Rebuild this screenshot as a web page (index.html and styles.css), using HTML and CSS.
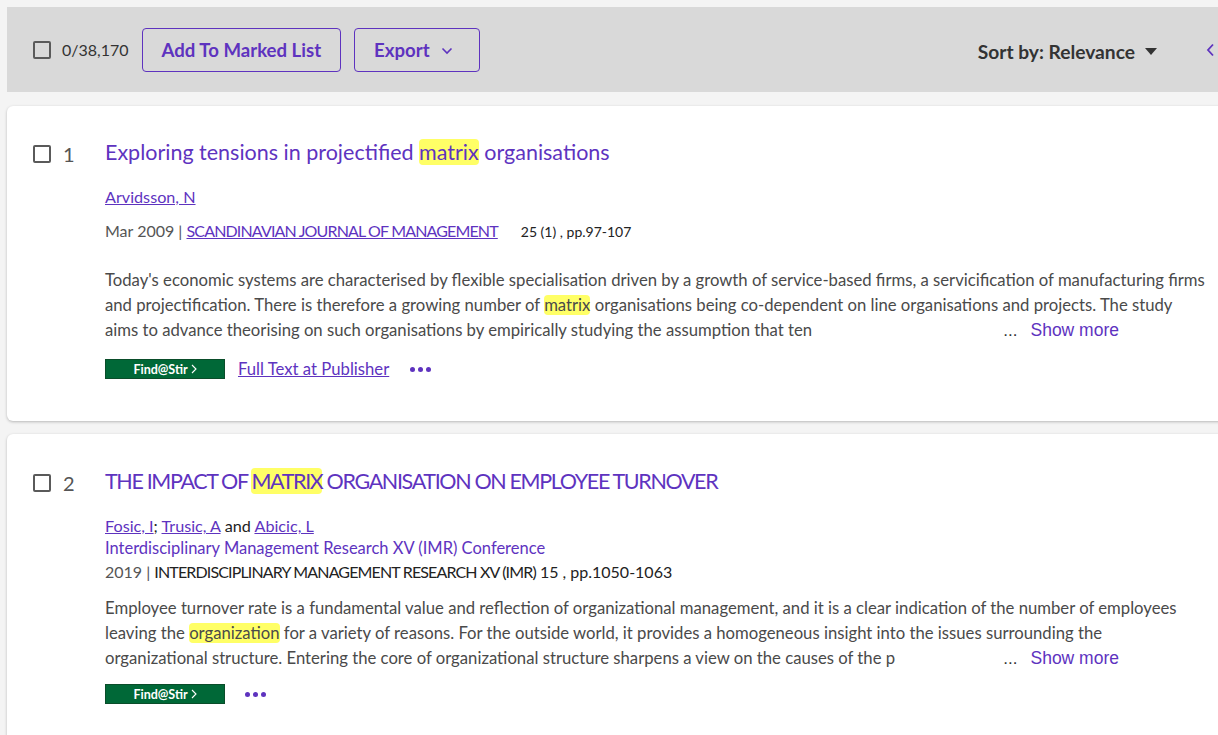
FILE: index.html
```html
<!DOCTYPE html>
<html>
<head>
<meta charset="utf-8">
<link rel="stylesheet" href="styles.css">
</head>
<body>
<div class="page">
  <div class="toolbar">
    <div class="tb-left">
      <span class="checkbox"></span>
      <span class="count">0/38,170</span>
      <button class="btn">Add To Marked List</button>
      <button class="btn btn-export">Export
        <svg class="chev" width="12" height="8" viewBox="0 0 12 8"><polyline points="1.5,1.5 6,6 10.5,1.5" fill="none" stroke="#5e33bf" stroke-width="1.6"/></svg>
      </button>
    </div>
    <div class="tb-right">
      <span class="sort">Sort by: Relevance</span>
      <svg class="caret" width="12" height="7" viewBox="0 0 12 7"><polygon points="0,0 12,0 6,7" fill="#333"/></svg>
      <svg class="prev" width="9" height="14" viewBox="0 0 9 14"><polyline points="7,1.5 2,7 7,12.5" fill="none" stroke="#5e33bf" stroke-width="1.8"/></svg>
    </div>
  </div>

  <div class="card card1">
    <div class="idx"><span class="checkbox"></span><span class="num">1</span></div>
    <div class="body">
      <h2 class="title">Exploring tensions in projectified <mark>matrix</mark> organisations</h2>
      <div class="authors"><a href="#">Arvidsson, N</a></div>
      <div class="meta"><span class="date">Mar 2009 | </span><a href="#" class="caps">SCANDINAVIAN JOURNAL OF MANAGEMENT</a><span class="vol">25 (1) , pp.97-107</span></div>
      <div class="abstract">
        <p>Today's economic systems are characterised by flexible specialisation driven by a growth of service-based firms, a servicification of manufacturing firms<br>and projectification. There is therefore a growing number of <mark>matrix</mark> organisations being co-dependent on line organisations and projects. The study</p>
        <div class="lastline"><span>aims to advance theorising on such organisations by empirically studying the assumption that ten</span><span class="more"><span class="ell">...</span><a href="#">Show more</a></span></div>
      </div>
      <div class="links">
        <span class="find">Find@Stir<svg width="6" height="10" viewBox="0 0 6 10"><polyline points="1,1 5,5 1,9" fill="none" stroke="#fff" stroke-width="1.1"/></svg></span>
        <a href="#" class="ftp">Full Text at Publisher</a>
        <span class="dots"><i></i><i></i><i></i></span>
      </div>
    </div>
  </div>

  <div class="card card2">
    <div class="idx"><span class="checkbox"></span><span class="num">2</span></div>
    <div class="body">
      <h2 class="title title-caps">THE IMPACT OF <mark>MATRIX</mark> ORGANISATION ON EMPLOYEE TURNOVER</h2>
      <div class="authors"><a href="#">Fosic, I</a>; <a href="#">Trusic, A</a> <span class="and">and</span> <a href="#">Abicic, L</a></div>
      <div class="conf">Interdisciplinary Management Research XV (IMR) Conference</div>
      <div class="meta2"><span class="date">2019 | </span><span class="src caps">INTERDISCIPLINARY MANAGEMENT RESEARCH XV (IMR)</span><span class="src"> 15 , pp.1050-1063</span></div>
      <div class="abstract">
        <p>Employee turnover rate is a fundamental value and reflection of organizational management, and it is a clear indication of the number of employees<br>leaving the <mark>organization</mark> for a variety of reasons. For the outside world, it provides a homogeneous insight into the issues surrounding the</p>
        <div class="lastline"><span>organizational structure. Entering the core of organizational structure sharpens a view on the causes of the p</span><span class="more"><span class="ell">...</span><a href="#">Show more</a></span></div>
      </div>
      <div class="links">
        <span class="find">Find@Stir<svg width="6" height="10" viewBox="0 0 6 10"><polyline points="1,1 5,5 1,9" fill="none" stroke="#fff" stroke-width="1.1"/></svg></span>
        <span class="dots dots2"><i></i><i></i><i></i></span>
      </div>
    </div>
  </div>
</div>
</body>
</html>
```
FILE: styles.css
```css
* { box-sizing: border-box; }
html, body { margin: 0; padding: 0; }
body {
  background: #f4f4f4;
  font-family: Lato, "Noto Sans", sans-serif;
  color: #494949;
  overflow: hidden;
  width: 1218px;
  height: 735px;
}
.page {
  padding: 7px 0 0 7px;
  width: 1240px;
}
.toolbar {
  background: #d9d9d9;
  height: 85px;
  display: flex;
  align-items: center;
  justify-content: space-between;
  padding: 0 0 0 26px;
}
.tb-left { display: flex; align-items: center; }
.checkbox {
  display: inline-block;
  width: 18px;
  height: 18px;
  border: 2px solid #5a5a5a;
  border-radius: 2px;
}
.count { margin-left: 11px; font-size: 16px; color: #333; }
.btn {
  font-family: inherit;
  background: transparent;
  border: 1px solid #5e33bf;
  border-radius: 4px;
  height: 44px;
  color: #5e33bf;
  font-size: 18.6px;
  font-weight: 700;
  padding: 0 19px;
  margin-left: 13px;
  display: inline-flex;
  align-items: center;
}
.btn-export { padding: 0 26px 0 19px; }
.chev { margin-left: 11px; margin-top: 2px; }
.tb-right { display: flex; align-items: center; padding-right: 25px; margin-top: 4px; }
.sort { font-size: 19.2px; font-weight: 700; color: #333; }
.caret { margin-left: 10px; }
.prev { margin-left: 49px; margin-top: -4px; }

.card {
  background: #fff;
  border-radius: 6px;
  box-shadow: 0 1px 3px rgba(0,0,0,0.25);
  margin-top: 14px;
  display: flex;
  padding: 0 0 0 26px;
}
.card1 { height: 315px; padding-top: 33px; }
.card2 { margin-top: 13px; height: 310px; padding-top: 34px; }
.idx { display: flex; align-items: center; width: 72px; height: 18px; margin-top: 6px; }
.num { margin-left: 12px; font-size: 20px; color: #555; }
.body { width: 1105px; }
.title {
  margin: 0;
  font-size: 21.5px;
  font-weight: 400;
  color: #5e33bf;
  line-height: 26px;
}
.title-caps { letter-spacing: -1.35px; }
mark {
  background: #ffff66;
  color: inherit;
  border-radius: 4px;
}
a { color: #5e33bf; }
.caps { letter-spacing: -0.85px; }
.authors { margin-top: 21px; font-size: 16.2px; line-height: 22px; color: #222; }
.card2 .authors { margin-top: 21px; }
.meta { margin-top: 12px; font-size: 16px; line-height: 22px; color: #555; }
.vol { margin-left: 23px; font-size: 14px; color: #222; }
.conf { font-size: 16.5px; line-height: 23px; color: #5e33bf; }
.meta2 { font-size: 16px; line-height: 23px; color: #555; }
.src { color: #222; }
.abstract { margin-top: 25px; font-size: 16.7px; line-height: 25px; color: #4a4a4a; }
.card2 .abstract { margin-top: 13px; }
.abstract p { margin: 0; }
.lastline { display: flex; justify-content: space-between; padding-right: 91px; }
.more { font-family: "Liberation Sans", Arial, sans-serif; font-size: 17.5px; }
.ell { color: #333; margin-right: 13px; font-size: 17px; }
.more a { text-decoration: none; }
.links { margin-top: 16px; display: flex; align-items: center; height: 20px; }
.card2 .links { margin-top: 13px; }
.find {
  width: 120px;
  height: 20px;
  background: #006837;
  border: 1px solid #0a4d2a;
  color: #fff;
  font-size: 12.5px;
  font-weight: 700;
  display: inline-flex;
  align-items: center;
  justify-content: center;
  gap: 3px;
}
.ftp { margin-left: 13px; font-size: 16.7px; }
.dots { display: inline-flex; gap: 3px; margin-left: 21px; }
.dots2 { margin-left: 20px; }
.dots i { width: 5px; height: 5px; border-radius: 50%; background: #5e33bf; display: block; }
```
